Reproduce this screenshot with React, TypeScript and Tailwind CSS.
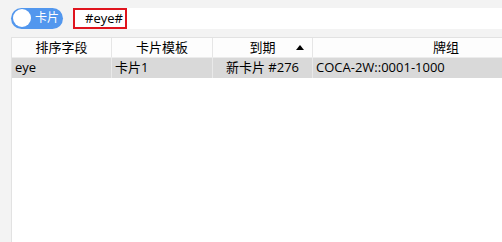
import React from "react";

export default function App() {
  const font = { fontFamily: '"Segoe UI", "Open Sans", "Noto Sans CJK SC", sans-serif' };
  return (
    <div className="w-[502px] h-[242px] bg-[#f3f3f3] overflow-hidden flex flex-col text-[13px] text-black" style={font}>
      <div className="flex items-center h-[37px] pl-[11px] pb-[1px]">
        <div className="flex items-center w-[52px] h-[21px] rounded-full bg-[#5297ee] pl-[2px]">
          <div className="w-[18px] h-[18px] rounded-full bg-white"></div>
          <span className="ml-[4px] text-[12px] text-white leading-none">卡片</span>
        </div>
        <div className="flex-1 ml-[10px] h-[21px] bg-white flex items-center">
          <div className="h-[21px] w-[54px] border-2 border-[#e0141e] flex items-center pl-[10px] leading-none">#eye#</div>
        </div>
      </div>
      <div className="flex-1 ml-[11px] bg-white border-l border-t border-[#e2e2e2] overflow-hidden">
        <div className="flex h-[20px] bg-[#fdfdfd] border-b border-[#ececec] w-[700px]">
          <div className="w-[100px] flex items-center justify-center border-r border-[#e6e6e6]">排序字段</div>
          <div className="w-[101px] flex items-center justify-center border-r border-[#e6e6e6]">卡片模板</div>
          <div className="w-[100px] flex items-center justify-center border-r border-[#e6e6e6] relative">
            到期
            <span className="absolute right-[8px] top-[7px] w-0 h-0 border-l-[4px] border-r-[4px] border-b-[5px] border-l-transparent border-r-transparent border-b-black"></span>
          </div>
          <div className="w-[266px] flex items-center justify-center">牌组</div>
        </div>
        <div className="flex h-[20px] bg-[#d9d9d9] w-[700px]">
          <div className="w-[100px] flex items-center pl-[3px] border-r border-[#e9e9e9]">eye</div>
          <div className="w-[101px] flex items-center pl-[3px] border-r border-[#e9e9e9]">卡片1</div>
          <div className="w-[100px] flex items-center justify-center border-r border-[#e9e9e9]">新卡片 #276</div>
          <div className="w-[266px] flex items-center pl-[3px]">COCA-2W::0001-1000</div>
        </div>
      </div>
    </div>
  );
}
